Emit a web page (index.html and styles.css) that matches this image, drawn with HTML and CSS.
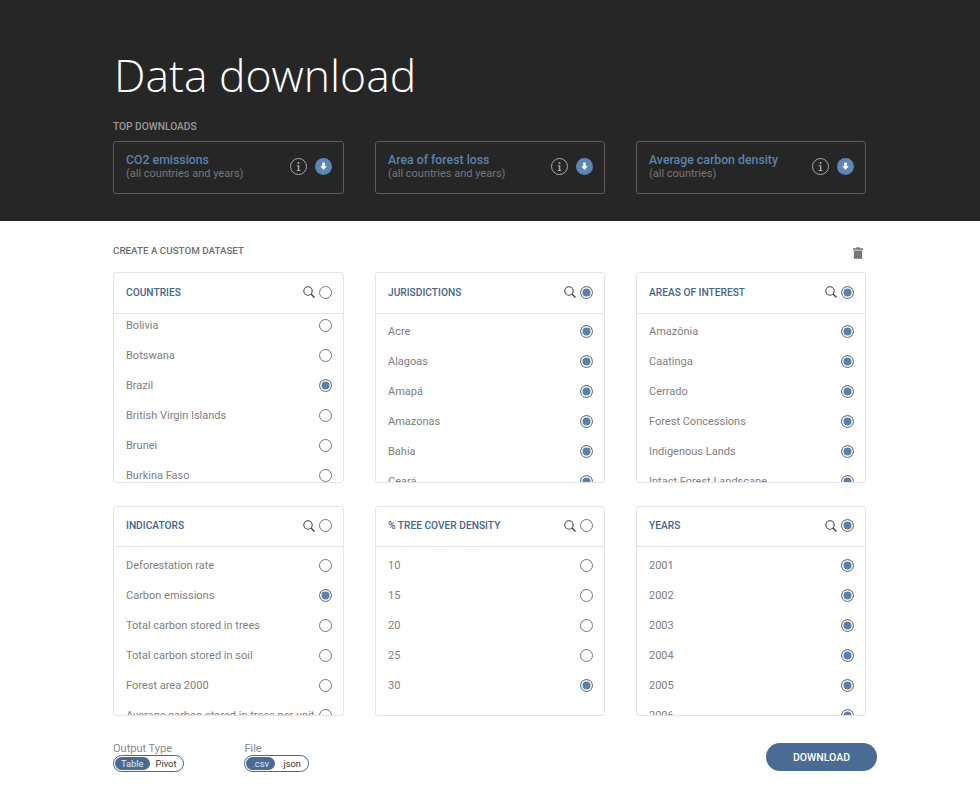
FILE: index.html
```html
<!DOCTYPE html>
<html lang="en">
<head>
<meta charset="UTF-8">
<meta name="viewport" content="width=device-width, initial-scale=1.0">
<title>Data download</title>
<link rel="stylesheet" href="styles.css">
</head>
<body>

<svg class="defs" width="0" height="0">
  <symbol id="search" viewBox="0 0 12 12">
    <circle cx="5" cy="5" r="4.2" fill="none" stroke="currentColor" stroke-width="1.1"/>
    <path d="M8 8 L11.5 11.5" stroke="currentColor" stroke-width="1.4" fill="none"/>
  </symbol>
  <symbol id="info" viewBox="0 0 17 17">
    <circle cx="8.5" cy="8.5" r="8" fill="none" stroke="currentColor" stroke-width="1"/>
    <circle cx="8.5" cy="4.9" r="1" fill="currentColor"/>
    <path d="M6.8 7.2 H9.3 V12 H10.4 V13 H6.7 V12 H7.9 V8.2 H6.8 Z" fill="currentColor"/>
  </symbol>
  <symbol id="down" viewBox="0 0 17 17">
    <circle cx="8.5" cy="8.5" r="8.5" fill="#5d86b5"/>
    <path d="M7.2 4.5 H9.8 V8.2 H11.8 L8.5 12 L5.2 8.2 H7.2 Z" fill="#fff"/>
  </symbol>
</svg>

<header class="top">
  <h1>Data download</h1>
  <h3 class="label">TOP DOWNLOADS</h3>
  <div class="grid">
    <div class="top-card">
      <div class="top-text"><div class="top-title">CO2 emissions</div><div class="top-sub">(all countries and years)</div></div>
      <svg class="ic17 info"><use href="#info"/></svg>
      <svg class="ic17"><use href="#down"/></svg>
    </div>
    <div class="top-card">
      <div class="top-text"><div class="top-title">Area of forest loss</div><div class="top-sub">(all countries and years)</div></div>
      <svg class="ic17 info"><use href="#info"/></svg>
      <svg class="ic17"><use href="#down"/></svg>
    </div>
    <div class="top-card">
      <div class="top-text"><div class="top-title">Average carbon density</div><div class="top-sub">(all countries)</div></div>
      <svg class="ic17 info"><use href="#info"/></svg>
      <svg class="ic17"><use href="#down"/></svg>
    </div>
  </div>
</header>

<main class="custom">
  <div class="custom-head">
    <h3 class="label dark">CREATE A CUSTOM DATASET</h3>
    <svg class="trash" viewBox="0 0 12 14"><path d="M4 0 H8 V1.2 H12 V3 H0 V1.2 H4 Z M1 4 H11 V14 H1 Z" fill="#777"/></svg>
  </div>

  <div class="grid panels">
    <section class="panel">
      <div class="panel-head"><span>COUNTRIES</span><svg class="search"><use href="#search"/></svg><i class="radio"></i></div>
      <div class="rows scrolled">
        <div class="row">Bolivia<i class="radio"></i></div>
        <div class="row">Botswana<i class="radio"></i></div>
        <div class="row">Brazil<i class="radio on"></i></div>
        <div class="row">British Virgin Islands<i class="radio"></i></div>
        <div class="row">Brunei<i class="radio"></i></div>
        <div class="row">Burkina Faso<i class="radio"></i></div>
        <div class="row">Burundi<i class="radio"></i></div>
      </div>
    </section>
    <section class="panel">
      <div class="panel-head"><span>JURISDICTIONS</span><svg class="search"><use href="#search"/></svg><i class="radio on"></i></div>
      <div class="rows">
        <div class="row">Acre<i class="radio on"></i></div>
        <div class="row">Alagoas<i class="radio on"></i></div>
        <div class="row">Amapá<i class="radio on"></i></div>
        <div class="row">Amazonas<i class="radio on"></i></div>
        <div class="row">Bahia<i class="radio on"></i></div>
        <div class="row">Ceará<i class="radio on"></i></div>
      </div>
    </section>
    <section class="panel">
      <div class="panel-head"><span>AREAS OF INTEREST</span><svg class="search"><use href="#search"/></svg><i class="radio on"></i></div>
      <div class="rows">
        <div class="row">Amazônia<i class="radio on"></i></div>
        <div class="row">Caatinga<i class="radio on"></i></div>
        <div class="row">Cerrado<i class="radio on"></i></div>
        <div class="row">Forest Concessions<i class="radio on"></i></div>
        <div class="row">Indigenous Lands<i class="radio on"></i></div>
        <div class="row">Intact Forest Landscape<i class="radio on"></i></div>
      </div>
    </section>
    <section class="panel">
      <div class="panel-head"><span>INDICATORS</span><svg class="search"><use href="#search"/></svg><i class="radio"></i></div>
      <div class="rows">
        <div class="row">Deforestation rate<i class="radio"></i></div>
        <div class="row">Carbon emissions<i class="radio on"></i></div>
        <div class="row">Total carbon stored in trees<i class="radio"></i></div>
        <div class="row">Total carbon stored in soil<i class="radio"></i></div>
        <div class="row">Forest area 2000<i class="radio"></i></div>
        <div class="row">Average carbon stored in trees per unit<i class="radio"></i></div>
      </div>
    </section>
    <section class="panel">
      <div class="panel-head"><span>% TREE COVER DENSITY</span><svg class="search"><use href="#search"/></svg><i class="radio"></i></div>
      <div class="rows">
        <div class="row">10<i class="radio"></i></div>
        <div class="row">15<i class="radio"></i></div>
        <div class="row">20<i class="radio"></i></div>
        <div class="row">25<i class="radio"></i></div>
        <div class="row">30<i class="radio on"></i></div>
      </div>
    </section>
    <section class="panel">
      <div class="panel-head"><span>YEARS</span><svg class="search"><use href="#search"/></svg><i class="radio on"></i></div>
      <div class="rows">
        <div class="row">2001<i class="radio on"></i></div>
        <div class="row">2002<i class="radio on"></i></div>
        <div class="row">2003<i class="radio on"></i></div>
        <div class="row">2004<i class="radio on"></i></div>
        <div class="row">2005<i class="radio on"></i></div>
        <div class="row">2006<i class="radio on"></i></div>
      </div>
    </section>
  </div>

  <div class="bottom">
    <div class="option">
      <div class="option-label">Output Type</div>
      <div class="switch"><span class="active">Table</span><span>Pivot</span></div>
    </div>
    <div class="option">
      <div class="option-label">File</div>
      <div class="switch"><span class="active">.csv</span><span>.json</span></div>
    </div>
    <button class="download">DOWNLOAD</button>
  </div>
</main>

</body>
</html>
```
FILE: styles.css
```css
* {
  box-sizing: border-box;
}
body {
  margin: 0;
  font-family: Roboto, "Noto Sans", Arial, sans-serif;
  background: #fff;
  color: #777;
}
.defs {
  position: absolute;
}
.top {
  height: 221px;
  background: #262626;
  padding: 49px 114px 0 113px;
}
h1 {
  margin: 0 0 19px 1px;
  font-family: "Open Sans", sans-serif;
  font-size: 44.5px;
  line-height: 52px;
  font-weight: 300;
  color: #fff;
}
.label {
  margin: 0;
  font-size: 10.2px;
  line-height: 14px;
  font-weight: 500;
  color: #9a9a9a;
}
.label.dark {
  font-size: 9.8px;
  color: #6f6f6f;
}
.grid {
  display: grid;
  grid-template-columns: 231px 230px 230px;
  column-gap: 31px;
}
.top-card {
  display: flex;
  align-items: center;
  height: 53px;
  margin-top: 7px;
  padding: 0 11px 2px 12px;
  border: 1px solid #5c5c5c;
  border-radius: 3px;
}
.top-text {
  flex: 1;
}
.top-title {
  font-size: 12.3px;
  line-height: 13px;
  font-weight: 500;
  color: #5a82b0;
}
.top-sub {
  font-size: 11px;
  line-height: 13px;
  color: #777;
}
.ic17 {
  width: 17px;
  height: 17px;
}
.info {
  color: #a8a8a8;
  margin-right: 8px;
}
.custom {
  padding: 0 114px 0 113px;
}
.custom-head {
  display: flex;
  justify-content: space-between;
  height: 51px;
  padding-top: 23px;
}
.trash {
  width: 10px;
  height: 12px;
  margin: 3px 3px 0 0;
}
.panels {
  grid-template-rows: 211px 210px;
  row-gap: 23px;
}
.panel {
  border: 1px solid #e2e4e8;
  border-radius: 3px;
  overflow: hidden;
}
.panel-head {
  display: flex;
  align-items: center;
  height: 41px;
  padding: 0 11px 2px 12px;
  border-bottom: 1px solid #e2e4e8;
  font-size: 10.2px;
  font-weight: 500;
  color: #44658c;
}
.panel:nth-child(n+4) .panel-head {
  height: 40px;
}
.panel:nth-child(n+4) .rows {
  padding-top: 3px;
}
.panel-head span {
  flex: 1;
}
.search {
  width: 12px;
  height: 12px;
  margin-right: 4px;
  color: #444;
}
.radio {
  display: block;
  flex: none;
  width: 13px;
  height: 13px;
  border: 1.5px solid #777;
  border-radius: 50%;
  background: #fff;
}
.radio.on {
  background: #5b80aa;
  box-shadow: inset 0 0 0 1.5px #fff;
}
.rows {
  padding-top: 2px;
}
.rows.scrolled {
  margin-top: -6px;
}
.row {
  display: flex;
  align-items: center;
  justify-content: space-between;
  height: 30px;
  padding: 0 11px 0 12px;
  font-size: 11px;
  white-space: nowrap;
  color: #808080;
}
.bottom {
  display: flex;
  align-items: flex-start;
  padding-top: 26px;
}
.option {
  margin-right: 60px;
}
.option-label {
  font-size: 11px;
  line-height: 13px;
  color: #8a8a8a;
}
.switch {
  display: flex;
  width: fit-content;
  border: 1px solid #44658c;
  border-radius: 9px;
  height: 17px;
  padding: 1px;
  font-size: 9.3px;
  line-height: 13px;
  color: #333;
}
.switch span {
  padding: 0 6px;
  border-radius: 7px;
}
.switch .active {
  background: #4a6c94;
  color: #dfe6ee;
}
.download {
  width: 111px;
  height: 28px;
  margin: 1px -11px 0 auto;
  border: none;
  border-radius: 14px;
  background: #4a6c94;
  color: #fff;
  font-family: inherit;
  font-size: 10.5px;
  font-weight: 500;
}
```
